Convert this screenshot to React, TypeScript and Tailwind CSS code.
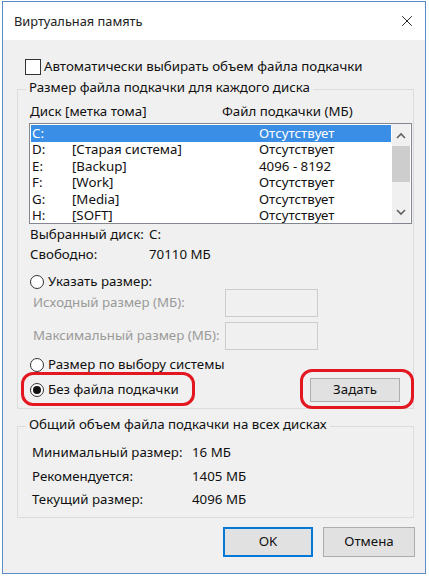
import { X } from "lucide-react";

const drives = [
  { d: "C:", label: "", size: "Отсутствует", selected: true },
  { d: "D:", label: "[Старая система]", size: "Отсутствует" },
  { d: "E:", label: "[Backup]", size: "4096 - 8192" },
  { d: "F:", label: "[Work]", size: "Отсутствует" },
  { d: "G:", label: "[Media]", size: "Отсутствует" },
  { d: "H:", label: "[SOFT]", size: "Отсутствует" },
];

function Radio({ checked = false }: { checked?: boolean }) {
  return (
    <span className="w-[14px] h-[14px] rounded-full border border-[#333] bg-white flex items-center justify-center shrink-0">
      {checked && <span className="w-[8px] h-[8px] rounded-full bg-[#111]" />}
    </span>
  );
}

function Chevron({ up }: { up?: boolean }) {
  return (
    <svg width="10" height="7" viewBox="0 0 10 7" className="text-[#606060]">
      <path
        d={up ? "M1 6 L5 2 L9 6" : "M1 1 L5 5 L9 1"}
        fill="none"
        stroke="currentColor"
        strokeWidth="1.6"
      />
    </svg>
  );
}

export default function App() {
  return (
    <div
      className="w-[429px] h-[577px] bg-white overflow-hidden text-[13.3px] text-[#111] leading-none whitespace-nowrap"
      style={{ fontFamily: '"Noto Sans", "Open Sans", sans-serif' }}
    >
      <div className="ml-[2px] mt-[1px] w-[424px] h-[573px] border border-[#5b8dc4] flex flex-col">
        {/* Title bar */}
        <div className="h-[38px] bg-white flex items-center justify-between pl-[11px] pr-[9px] shrink-0">
          <span className="text-[12.8px] text-[#222]">Виртуальная память</span>
          <X size={18} strokeWidth={1.3} className="text-[#222]" />
        </div>

        {/* Body */}
        <div className="flex-1 bg-[#f0f0f0] flex flex-col">
          <div className="h-[20px] mt-[17px] ml-[22px] flex items-center gap-[3px]">
            <span className="w-[16px] h-[16px] border border-[#333] bg-white" />
            <span>Автоматически выбирать объем файла подкачки</span>
          </div>

          {/* Group 1 */}
          <div className="relative mt-[12px] ml-[14px] w-[397px] border border-[#dcdcdc] pl-[11px] pr-[1px] pt-[13px] pb-[6px]">
            <span className="absolute -top-[9px] left-[8px] px-[3px] bg-[#f0f0f0]">
              Размер файла подкачки для каждого диска
            </span>
            <div className="h-[18px] flex items-center">
              <span className="w-[193px] pl-[1px]">Диск [метка тома]</span>
              <span>Файл подкачки (МБ)</span>
            </div>
            <div className="mt-[2px] h-[101px] border border-[#828790] bg-white flex">
              <div className="flex-1 pl-[1px] pt-[1px]">
                {drives.map((r) => (
                  <div
                    key={r.d}
                    className={`h-[16.5px] flex items-center ${r.selected ? "bg-[#3a8ee6] text-white" : ""}`}
                  >
                    <span className="w-[41px] pl-[1px]">{r.d}</span>
                    <span className="w-[187px]">{r.label}</span>
                    <span>{r.size}</span>
                  </div>
                ))}
              </div>
              <div className="w-[18px] mr-[1px] ml-[1px] bg-[#f0f0f0] flex flex-col items-center">
                <div className="h-[22px] flex items-center justify-center">
                  <Chevron up />
                </div>
                <div className="w-full h-[36px] bg-[#cdcdcd]" />
                <div className="flex-1" />
                <div className="h-[22px] flex items-center justify-center">
                  <Chevron />
                </div>
              </div>
            </div>

            <div className="mt-[1px] grid grid-cols-[119px_1fr] auto-rows-[20px] items-center pl-[1px]">
              <span>Выбранный диск:</span>
              <span>C:</span>
              <span>Свободно:</span>
              <span>70110 МБ</span>
            </div>

            <div className="mt-[7px] h-[20px] flex items-center gap-[4px] pl-[1px]">
              <Radio />
              <span>Указать размер:</span>
            </div>
            <div className="mt-[-3px] flex flex-col gap-[5px] text-[#9a9a9a] pl-[4px]">
              <div className="h-[28px] flex items-center justify-between pr-[94px]">
                <span>Исходный размер (МБ):</span>
                <span className="w-[93px] h-[28px] border border-[#cccccc] bg-[#f0f0f0]" />
              </div>
              <div className="h-[28px] flex items-center justify-between pr-[94px]">
                <span>Максимальный размер (МБ):</span>
                <span className="w-[93px] h-[28px] border border-[#cccccc] bg-[#f0f0f0]" />
              </div>
            </div>
            <div className="mt-[5px] h-[20px] flex items-center gap-[4px] pl-[1px]">
              <Radio />
              <span>Размер по выбору системы</span>
            </div>
            <div className="relative mt-[3px] h-[24px] flex items-center justify-between pl-[1px] pr-[12px]">
              <div className="flex items-center gap-[4px]">
                <Radio checked />
                <span>Без файла подкачки</span>
              </div>
              <button className="w-[90px] h-[24px] border border-[#adadad] bg-[#e1e1e1]">
                Задать
              </button>
              <span className="absolute left-[-8px] top-[-6px] w-[174px] h-[34px] rounded-[12px] border-[3px] border-[#e3171f]" />
              <span className="absolute right-[-2px] top-[-9px] w-[114px] h-[40px] rounded-[12px] border-[3px] border-[#e3171f]" />
            </div>
          </div>

          {/* Group 2 */}
          <div className="relative mt-[17px] ml-[14px] w-[397px] h-[92px] border border-[#dcdcdc] pl-[14px] pt-[14px]">
            <span className="absolute -top-[9px] left-[8px] px-[3px] bg-[#f0f0f0]">
              Общий объем файла подкачки на всех дисках
            </span>
            <div className="grid grid-cols-[160px_1fr] auto-rows-[23.5px] items-center">
              <span>Минимальный размер:</span>
              <span>16 МБ</span>
              <span>Рекомендуется:</span>
              <span>1405 МБ</span>
              <span>Текущий размер:</span>
              <span>4096 МБ</span>
            </div>
          </div>

          {/* Buttons */}
          <div className="mt-[9px] flex gap-[10px] pl-[220px]">
            <button className="w-[90px] h-[30px] border-2 border-[#0078d7] bg-[#e1e1e1]">OK</button>
            <button className="w-[92px] h-[30px] border border-[#adadad] bg-[#e1e1e1]">Отмена</button>
          </div>
        </div>
      </div>
    </div>
  );
}
